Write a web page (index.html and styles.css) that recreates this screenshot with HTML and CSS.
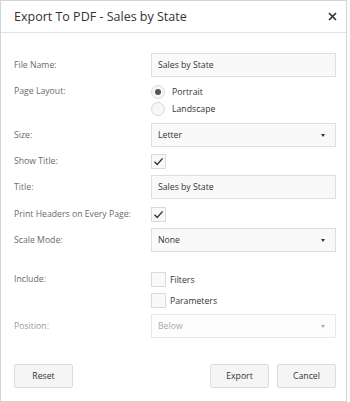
FILE: index.html
```html
<!DOCTYPE html>
<html>
<head>
<meta charset="utf-8">
<link rel="stylesheet" href="styles.css">
</head>
<body>
<div class="dialog">
  <div class="header">
    <span class="title">Export To PDF - Sales by State</span>
    <svg class="close" width="9" height="9" viewBox="0 0 9 9"><path d="M1 1L8 8M8 1L1 8" stroke="#333" stroke-width="1.7" fill="none"/></svg>
  </div>
  <div class="content">
    <div class="form">
      <div class="row r-file">
        <div class="lbl h24">File Name:</div>
        <div class="input">Sales by State</div>
      </div>
      <div class="row r-layout">
        <div class="lbl h17">Page Layout:</div>
        <div class="radios">
          <div class="opt"><span class="radio on"></span><span>Portrait</span></div>
          <div class="opt"><span class="radio"></span><span>Landscape</span></div>
        </div>
      </div>
      <div class="row r-size">
        <div class="lbl h24">Size:</div>
        <div class="input select">Letter<span class="caret"></span></div>
      </div>
      <div class="row r-show">
        <div class="lbl h15">Show Title:</div>
        <div class="cb-wrap"><span class="cb"><svg width="13" height="13" viewBox="0 0 13 13"><path d="M2.5 6.8L5.2 9.5L10.6 3.4" stroke="#333" stroke-width="1.4" fill="none"/></svg></span></div>
      </div>
      <div class="row r-title">
        <div class="lbl h24">Title:</div>
        <div class="input">Sales by State</div>
      </div>
      <div class="row r-print">
        <div class="lbl h15">Print Headers on Every Page:</div>
        <div class="cb-wrap"><span class="cb"><svg width="13" height="13" viewBox="0 0 13 13"><path d="M2.5 6.8L5.2 9.5L10.6 3.4" stroke="#333" stroke-width="1.4" fill="none"/></svg></span></div>
      </div>
      <div class="row r-scale">
        <div class="lbl h24">Scale Mode:</div>
        <div class="input select">None<span class="caret"></span></div>
      </div>
      <div class="row r-include">
        <div class="lbl h15">Include:</div>
        <div class="checks">
          <div class="opt2"><span class="cb"></span><span>Filters</span></div>
          <div class="opt2"><span class="cb"></span><span>Parameters</span></div>
        </div>
      </div>
      <div class="row r-pos">
        <div class="lbl h24 dim">Position:</div>
        <div class="input select disabled">Below<span class="caret"></span></div>
      </div>
    </div>
    <div class="footer">
      <div class="btn">Reset</div>
      <div class="right">
        <div class="btn">Export</div>
        <div class="btn">Cancel</div>
      </div>
    </div>
  </div>
</div>
</body>
</html>
```
FILE: styles.css
```css
html, body {
  margin: 0;
  padding: 0;
  background: #ffffff;
}
body {
  font-family: "Open Sans", "Noto Sans", sans-serif;
  font-size: 8.7px;
  color: #333;
}
.dialog {
  width: 347px;
  height: 402px;
  box-sizing: border-box;
  border: 1px solid #d4d4d4;
  display: flex;
  flex-direction: column;
  background: #fff;
}
.header {
  height: 31px;
  border-bottom: 1px solid #e2e2e2;
  display: flex;
  align-items: center;
  justify-content: space-between;
  padding: 0 9px 0 13px;
}
.title {
  font-size: 12.5px;
  color: #333;
}
.close {
  display: block;
  margin-top: -1px;
}
.content {
  flex: 1;
  display: flex;
  flex-direction: column;
  justify-content: space-between;
  padding: 20px 0 13px 13px;
}
.form {
  display: flex;
  flex-direction: column;
}
.row {
  display: grid;
  grid-template-columns: 137px 185px;
  align-items: start;
}
.lbl {
  color: #6a6a6a;
  white-space: nowrap;
}
.lbl.dim { color: #9a9a9a; }
.h24 { line-height: 24px; }
.h17 { line-height: 17px; }
.h15 { line-height: 15px; }
.input {
  height: 24px;
  box-sizing: border-box;
  border: 1px solid #dedede;
  background: #f9f9f9;
  padding: 0 6px;
  line-height: 22px;
  color: #333;
  position: relative;
}
.select .caret {
  position: absolute;
  right: 10px;
  top: 10px;
  width: 0;
  height: 0;
  border-left: 2.5px solid transparent;
  border-right: 2.5px solid transparent;
  border-top: 3px solid #333;
}
.input.disabled {
  background: #fdfdfd;
  border-color: #e8e8e8;
  color: #a8a8a8;
}
.input.disabled .caret { border-top-color: #aaa; }

.r-layout { margin-top: 6px; }
.r-size { margin-top: 6px; }
.r-show { margin-top: 7px; }
.r-title { margin-top: 6px; }
.r-print { margin-top: 8px; }
.r-scale { margin-top: 6px; }
.r-include { margin-top: 20px; }
.r-pos { margin-top: 6px; }

.radios {
  display: flex;
  flex-direction: column;
}
.opt {
  height: 17px;
  display: flex;
  align-items: center;
  gap: 7px;
  color: #333;
}
.radio {
  width: 14px;
  height: 14px;
  box-sizing: border-box;
  border-radius: 50%;
  border: 1px solid #dadada;
  background: #f7f7f7;
  display: flex;
  align-items: center;
  justify-content: center;
}
.radio.on::after {
  content: "";
  width: 6px;
  height: 6px;
  border-radius: 50%;
  background: #555;
}
.cb-wrap { height: 15px; display: flex; }
.cb {
  width: 15px;
  height: 15px;
  box-sizing: border-box;
  border: 1px solid #dadada;
  background: #f9f9f9;
  display: flex;
  align-items: center;
  justify-content: center;
  flex: none;
}
.checks {
  display: flex;
  flex-direction: column;
  gap: 6px;
}
.opt2 {
  height: 15px;
  display: flex;
  align-items: center;
  gap: 4px;
  color: #333;
}
.footer {
  display: flex;
  justify-content: space-between;
  width: 322px;
}
.right {
  display: flex;
  gap: 8px;
}
.btn {
  width: 59px;
  height: 24px;
  box-sizing: border-box;
  border: 1px solid #dcdcdc;
  border-radius: 2px;
  background: #f5f5f5;
  line-height: 22px;
  text-align: center;
  color: #333;
}
```
